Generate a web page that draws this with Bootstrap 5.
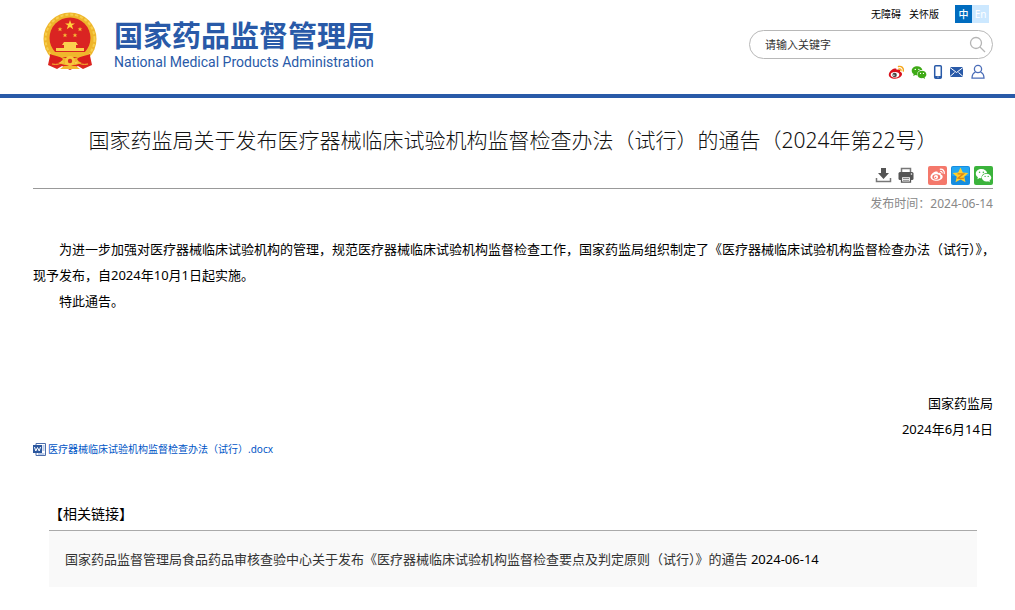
<!DOCTYPE html>
<html lang="zh-CN">
<head>
<meta charset="utf-8">
<meta name="viewport" content="width=device-width, initial-scale=1">
<title>国家药监局关于发布医疗器械临床试验机构监督检查办法（试行）的通告</title>
<link href="https://cdn.jsdelivr.net/npm/bootstrap@5.3.0/dist/css/bootstrap.min.css" rel="stylesheet">
<style>
  body { font-family: "Noto Sans", "Noto Sans CJK SC", sans-serif; font-size: 13px; line-height: 26px; color: #000; background: #fff; }
  a { color: inherit; text-decoration: none; }
  svg { display: block; }
  .site-header { border-bottom: 4px solid #295aa8; height: 98px; padding: 5px 22px 0 42px; }
  .brand { gap: 16px; margin-top: 6px; color: #295aa8; }
  .brand-cn { font-family: "Noto Sans CJK SC", sans-serif; font-weight: 700; font-size: 29px; line-height: 38px; margin-top: 4px; }
  .brand-en { font-family: Roboto, "Liberation Sans", sans-serif; font-size: 14px; line-height: 18px; }
  .tools { width: 244px; }
  .top-links { font-size: 10px; line-height: 18px; gap: 8px; padding-right: 4px; }
  .lang { margin-left: 8px; }
  .lang a { width: 17px; text-align: center; color: #fff; background: #cce8ff; }
  .lang a.current { background: #006cbf; font-weight: 500; }
  .search { height: 29px; margin-top: 7px; border: 1px solid #b8b8b8; border-radius: 15px; padding: 0 6px 0 15px; }
  .search input { font-size: 11px; line-height: 16px; color: #333; background: none; min-width: 0; }
  .search input::placeholder { color: #333; opacity: 1; }
  .search button { background: none; border: 0; padding: 0; }
  .quick { gap: 6px; margin-top: 4px; padding-right: 7px; height: 18px; }
  .article { padding: 28px 22px 24px 33px; }
  h1 { font-size: 21px; line-height: 28px; font-weight: 300; color: #111; text-align: center; margin: 0 0 11px; }
  .actions { border-bottom: 1px solid #999; height: 24px; gap: 4px; padding-bottom: 3px; }
  .actions button { border: 0; background: none; padding: 0; }
  .published { font-size: 12px; line-height: 16px; margin-top: 7px; color: #888; }
  .content { margin: 24px -10px 0 0; }
  .content p { margin: 0; text-indent: 26px; }
  .signature { margin-top: 76px; }
  .attachment { font-size: 10px; line-height: 14px; color: #0055c6; gap: 2px; }
  .related { margin: 45px 16px 0; }
  h2 { font-size: 14px; line-height: 26px; font-weight: 400; margin: 0; padding-bottom: 3px; border-bottom: 1px solid #aaa; }
  .related ul { background: #f9f9f9; padding: 15px 16px; }
  .related a { color: #333; }
</style>
</head>
<body>
<svg width="0" height="0" class="position-absolute" aria-hidden="true">
  <symbol id="wechat" viewBox="0 0 18 16">
    <path d="M7 1C3.400 1 .8 3.200.8 6c0 1.600.9 2.900 2.200 3.800L2.500 12l2.400-1.300c.6.200 1.300.3 2 .3C6.500 7.500 9 5.200 12.800 5.200 12.300 2.800 10 1 7 1z"/>
    <path d="M12.300 6c-3 0-5.100 1.900-5.100 4.200s2.100 4.200 5.100 4.200c.6 0 1.100-.1 1.600-.2l1.900 1-.5-1.700c1.200-.8 2-1.900 2-3.300C17.300 7.900 15.200 6 12.300 6z"/>
    <g fill="var(--eye)"><circle cx="4.800" cy="4.500" r=".8"/><circle cx="8.800" cy="4.500" r=".8"/><circle cx="10.700" cy="9" r=".7"/><circle cx="14" cy="9" r=".7"/></g>
  </symbol>
</svg>

<header class="site-header d-flex justify-content-between align-items-start">
  <a href="#" class="brand d-flex">
    <svg width="56" height="60" viewBox="0 0 56 60" aria-hidden="true">
      <path d="M9 40 6 54l9 4 5-3 8 4 8-4 5 3 9-4-3-14z" fill="#dc2420"/>
      <circle cx="28" cy="28" r="26.500" fill="#eeb52b"/>
      <circle cx="28" cy="28" r="24.500" fill="none" stroke="#f7cf4e" stroke-width="2" stroke-dasharray="3 2"/>
      <circle cx="28" cy="27" r="20.500" fill="#da2422"/>
      <path d="m28 9 1.200 3.400H33l-3 2.200 1.200 3.600-3.200-2.200-3.200 2.200 1.200-3.600-3-2.200h3.800z" fill="#ffd43c"/>
      <g fill="#f6bd36"><path id="st" d="m18 16 .7 1.600h1.700l-1.400 1 .6 1.700-1.600-1-1.600 1 .6-1.700-1.400-1h1.700z"/><use href="#st" x="20"/><use href="#st" x="5" y="6"/><use href="#st" x="15" y="6"/></g>
      <path d="M22 31h12l2 3h-2v3h8v3H14v-3h8v-3h-2z" fill="#fbd04e"/>
      <path d="M8 41h40l-3 5H11z" fill="#f0b72c"/>
      <path d="M8 43c5 2 10 2 13 5-3 5-8 5-13 4zM48 43c-5 2-10 2-13 5 3 5 8 5 13 4z" fill="#d91f1e"/>
      <path d="M10 53c5 1 8 0 11-2M46 53c-5 1-8 0-11-2" fill="none" stroke="#f5bd31" stroke-width="1"/>
      <circle cx="28" cy="50" r="5" fill="#f8c63c"/><circle cx="28" cy="50" r="2.200" fill="#d83021"/>
      <path d="m18 58 4-3h12l4 3z" fill="#f2b92f"/>
    </svg>
    <span class="d-flex flex-column">
      <span class="brand-cn">国家药品监督管理局</span>
      <span class="brand-en">National Medical Products Administration</span>
    </span>
  </a>
  <div class="tools">
    <nav class="top-links d-flex justify-content-end" aria-label="辅助功能">
      <a href="#">无障碍</a><a href="#">关怀版</a>
      <span class="lang d-flex"><a href="#" class="current">中</a><a href="#">En</a></span>
    </nav>
    <form class="search d-flex align-items-center">
      <input class="flex-grow-1 border-0 p-0" type="text" placeholder="请输入关键字" aria-label="请输入关键字">
      <button type="button" aria-label="搜索"><svg width="17" height="17" viewBox="0 0 17 17" fill="none" stroke="#b5b5b5" stroke-width="1.300"><circle cx="7" cy="7" r="5.500"/><path d="m11 11 5 5"/></svg></button>
    </form>
    <nav class="quick d-flex justify-content-end align-items-center" aria-label="快捷入口">
      <a href="#" aria-label="微博"><svg width="17" height="15" viewBox="0 0 17 15"><path d="M6.500 3.500C4 4 .8 7.200.8 9.800c0 2.500 2.900 4 6.200 4 4 0 7-2.200 7-4.700 0-1.500-1-2.100-2-2.400.7-1.900-.6-2.800-3.400-1.700.4-1.300-.5-1.800-2.100-1.500z" fill="#d9101b"/><ellipse cx="7" cy="9.800" rx="4.300" ry="2.800" fill="#fff"/><circle cx="6.600" cy="9.900" r="2.200" fill="#444"/><circle cx="5.900" cy="10.300" r=".7" fill="#fff"/><path d="M10.500 1.500c3-.7 5.500 1.500 4.800 4.600M11 4c1.400-.3 2.300.5 2 1.700" fill="none" stroke="#f6a71c" stroke-width="1.400" stroke-linecap="round"/></svg></a>
      <a href="#" aria-label="微信"><svg width="16" height="15" fill="#3faa17" style="--eye:#fff"><use href="#wechat"/></svg></a>
      <a href="#" aria-label="手机版"><svg width="10" height="14" viewBox="0 0 10 14"><rect x="1.700" y=".8" width="6.600" height="12.400" rx="1" fill="none" stroke="#295aa8" stroke-width="1.500"/><path d="M2 11h6v2H2z" fill="#295aa8"/><circle cx="5" cy="12" r=".6" fill="#fff"/></svg></a>
      <a href="#" aria-label="邮箱"><svg width="15" height="12" viewBox="0 0 15 12"><path d="M1 1h13v10H1z" fill="#295aa8"/><path d="m1 1.500 6.500 5 6.500-5M1 10.500l4.500-4M14 10.500l-4.500-4" fill="none" stroke="#fff"/></svg></a>
      <a href="#" aria-label="个人中心"><svg width="16" height="16" viewBox="0 0 16 16" fill="none" stroke="#4a6db8" stroke-width="1.300"><circle cx="8" cy="5" r="3.600"/><path d="M5.500 8C3.300 9 2 11 2 14.200h12C14 11 12.700 9 10.500 8"/></svg></a>
    </nav>
  </div>
</header>

<main class="article">
  <h1>国家药监局关于发布医疗器械临床试验机构监督检查办法（试行）的通告（2024年第22号）</h1>
  <div class="actions d-flex justify-content-end align-items-center">
    <button type="button" aria-label="下载"><svg width="19" height="18" viewBox="0 0 19 18" fill="#555"><path d="M7 2h5v5h3l-5.500 6L4 7h3z"/><path d="M2.500 12v3.500h14V12" fill="none" stroke="#777" stroke-width="1.500"/></svg></button>
    <button type="button" aria-label="打印"><svg width="18" height="18" viewBox="0 0 18 18"><path d="M4.500 6V2.500h9V6" fill="none" stroke="#777" stroke-width="1.500"/><rect x="1.500" y="6" width="15" height="8" rx="1.500" fill="#555"/><path d="M4.500 10.500h9v5.700h-9z" fill="#fff" stroke="#555" stroke-width="1.300"/><path d="M6 12.500h6M6 14.300h6" stroke="#888"/><circle cx="14.500" cy="8" r=".8" fill="#fff"/></svg></button>
    <button type="button" class="ms-2" aria-label="分享到微博"><svg width="20" height="20" viewBox="0 0 20 20"><rect x="1" y="1" width="19" height="19" rx="2" fill="#f4786b"/><path d="M8.700 6.500C6.500 7 3.500 9.500 3.500 12c0 2.300 2.700 3.800 5.900 3.800 3.700 0 6.300-2 6.300-4.100 0-1.300-.8-1.900-1.900-2.200.6-1.500-.5-2.400-2.900-1.500.3-1.200-.7-1.800-2.200-1.500z" fill="#fff"/><ellipse cx="9.300" cy="12" rx="4" ry="2.700" fill="#f4786b"/><circle cx="9" cy="12.100" r="2.100" fill="#fff"/><circle cx="8.500" cy="12.500" r=".8" fill="#f4786b"/><path d="M12.800 4.300c2.800-.6 5.200 1.600 4.400 4.700M13.200 6.500c1.300-.2 2.200.6 1.900 1.800" fill="none" stroke="#fff" stroke-width="1.200"/></svg></button>
    <button type="button" aria-label="分享到QQ空间"><svg width="19" height="20" viewBox="0 0 19 20"><rect y="1" width="19" height="19" rx="2" fill="#168de0"/><rect x="1" y="2" width="17" height="9" rx="1" fill="#23a7f2"/><path d="m9.500 2.500 2.300 5 5.600.6-4.200 3.700 1.300 5.500-5-2.900-5 2.900 1.300-5.500L1.600 8.100l5.600-.6z" fill="#ffd02c"/><path d="M6.500 8.800h6l-5.500 4.400c2 .4 4 .4 6 0" fill="none" stroke="#dc8516" stroke-width="1.300"/></svg></button>
    <button type="button" aria-label="分享到微信"><svg width="19" height="20" viewBox="0 0 19 20"><rect y="1" width="19" height="19" rx="2" fill="#3bb33c"/><use href="#wechat" x="1" y="3" width="17" height="15" fill="#fff" style="--eye:#3bb33c"/></svg></button>
  </div>
  <div class="published text-end">发布时间：2024-06-14</div>

  <div class="content">
    <p>为进一步加强对医疗器械临床试验机构的管理，规范医疗器械临床试验机构监督检查工作，国家药监局组织制定了《医疗器械临床试验机构监督检查办法（试行）》，现予发布，自2024年10月1日起实施。</p>
    <p>特此通告。</p>
  </div>
  <div class="signature text-end">国家药监局<br>2024年6月14日</div>

  <div class="d-flex">
    <a href="#" class="attachment d-flex align-items-center">
      <svg width="13" height="13" viewBox="0 0 13 13" aria-hidden="true"><path d="M3 .5h9.500v12H3z" fill="#fff" stroke="#4c6dab"/><path d="M9.500 3h2M9.500 5h2M9.500 7h2M5 11h6.500" stroke="#7796cd"/><path d="M0 2h9v8H0z" fill="#2b579e"/><path d="m1.500 4 1.300 4L4.500 4.500 6.200 8l1.300-4" fill="none" stroke="#fff"/></svg>
      <span>医疗器械临床试验机构监督检查办法（试行）.docx</span>
    </a>
  </div>

  <section class="related">
    <h2>【相关链接】</h2>
    <ul class="list-unstyled mb-0">
      <li><a href="#">国家药品监督管理局食品药品审核查验中心关于发布《医疗器械临床试验机构监督检查要点及判定原则（试行）》的通告</a> 2024-06-14</li>
    </ul>
  </section>
</main>
<script src="https://cdn.jsdelivr.net/npm/bootstrap@5.3.0/dist/js/bootstrap.bundle.min.js"></script>
</body>
</html>
